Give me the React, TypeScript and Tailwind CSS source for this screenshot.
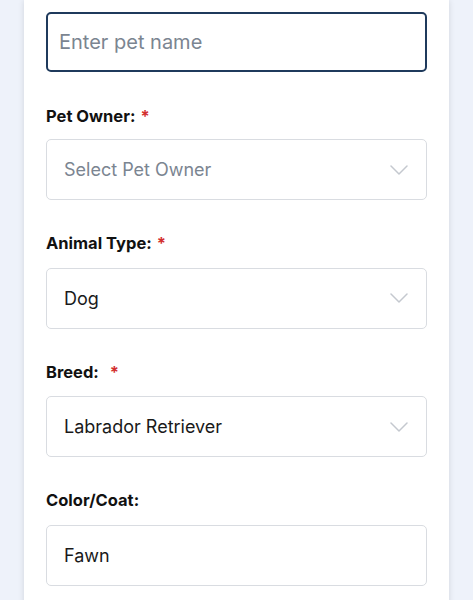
import React from 'react';

function Chevron() {
  return (
    <svg width="18" height="10" viewBox="0 0 18 10" fill="none" className="shrink-0">
      <path d="M1 1l8 8 8-8" stroke="#c4c8cf" strokeWidth="1.5" strokeLinecap="round" strokeLinejoin="round" />
    </svg>
  );
}

function Label({ text, required, wide }: { text: string; required?: boolean; wide?: boolean }) {
  return (
    <div className="flex items-center h-5 text-[16.5px] font-bold text-[#111111] leading-5">
      <span>{text}</span>
      {required && <span className={`text-[#d32f2f] ${wide ? 'ml-[11px]' : 'ml-[5px]'}`}>*</span>}
    </div>
  );
}

function SelectBox({ value, placeholder }: { value?: string; placeholder?: string }) {
  return (
    <div className="h-[61px] w-full rounded-[5px] border border-[#d9dce1] bg-white flex items-center justify-between pl-[17px] pr-[18px]">
      <span className={`text-[18px] ${value ? 'text-[#1a1a1a]' : 'text-[#7b8591]'}`}>{value || placeholder}</span>
      <Chevron />
    </div>
  );
}

export default function App() {
  return (
    <div className="min-h-screen bg-[#eef2fa] px-6" style={{ fontFamily: 'Inter, "Noto Sans", sans-serif' }}>
      <div className="bg-white w-[425px] min-h-[600px] shadow-[0_0_6px_rgba(0,0,0,0.12)] px-[22px] pt-[12px] pb-8">
        <div className="h-[60px] w-full rounded-[5px] border-2 border-[#1f3a5c] flex items-center pl-[11px]">
          <span className="text-[20px] text-[#7b8591]">Enter pet name</span>
        </div>

        <div className="mt-[34px]">
          <Label text="Pet Owner:" required />
        </div>
        <div className="mt-[13px]">
          <SelectBox placeholder="Select Pet Owner" />
        </div>

        <div className="mt-[33px]">
          <Label text="Animal Type:" required />
        </div>
        <div className="mt-[14.67px]">
          <SelectBox value="Dog" />
        </div>

        <div className="mt-[33px]">
          <Label text="Breed:" required wide />
        </div>
        <div className="mt-[14.67px]">
          <SelectBox value="Labrador Retriever" />
        </div>

        <div className="mt-[33px]">
          <Label text="Color/Coat:" />
        </div>
        <div className="mt-[14.67px]">
          <div className="h-[61px] w-full rounded-[5px] border border-[#d9dce1] bg-white flex items-center pl-[17px]">
            <span className="text-[18px] text-[#1a1a1a]">Fawn</span>
          </div>
        </div>
      </div>
    </div>
  );
}
